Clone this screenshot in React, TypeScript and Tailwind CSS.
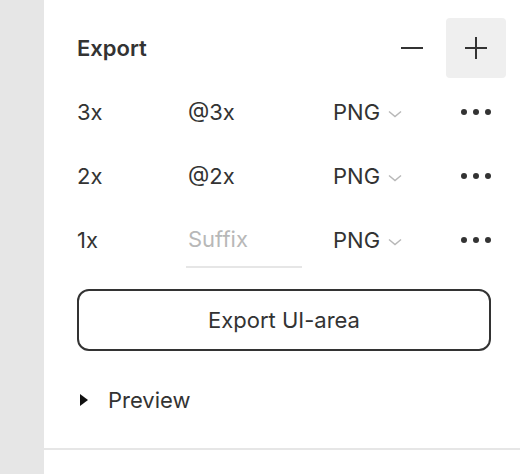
import React from 'react';

type ExportRow = { scale: string; suffix: string };

const rows: ExportRow[] = [
  { scale: '3x', suffix: '@3x' },
  { scale: '2x', suffix: '@2x' },
  { scale: '1x', suffix: '' },
];

const Chevron = () => (
  <svg width="14" height="8" viewBox="0 0 14 8" fill="none" className="ml-[8px] mt-[3px]">
    <path d="M1 1.5L7 6.5L13 1.5" stroke="#b8b8b8" strokeWidth="1.5" />
  </svg>
);

const Dots = () => (
  <div className="flex items-center gap-[6px]">
    <span className="block h-[6px] w-[6px] rounded-full bg-[#333]" />
    <span className="block h-[6px] w-[6px] rounded-full bg-[#333]" />
    <span className="block h-[6px] w-[6px] rounded-full bg-[#333]" />
  </div>
);

const App: React.FC = () => {
  return (
    <div
      className="flex h-[474px] w-[520px] overflow-hidden bg-white text-[#333]"
      style={{ fontFamily: 'Inter, "Noto Sans", sans-serif' }}
    >
      <div className="w-[44px] shrink-0 bg-[#e6e6e6]" />
      <div className="flex-1">
        <div className="border-b-2 border-[#e6e6e6] pb-[24px] pl-[33px] pr-[29px] pt-[18px]">
          {/* header */}
          <div className="mb-[2px] flex h-[60px] items-center">
            <span className="text-[22px] font-semibold">Export</span>
            <div className="-mr-[15px] ml-auto flex items-center gap-[4px]">
              <button className="flex h-[60px] w-[60px] items-center justify-center rounded-[4px]">
                <span className="block h-[2px] w-[22px] bg-[#333]" />
              </button>
              <button className="flex h-[60px] w-[60px] items-center justify-center rounded-[4px] bg-[#efefef]">
                <svg width="24" height="24" viewBox="0 0 24 24">
                  <path d="M12 1V23M1 12H23" stroke="#333" strokeWidth="2" />
                </svg>
              </button>
            </div>
          </div>

          {/* rows */}
          {rows.map((r) => (
            <div key={r.scale} className="flex h-[64px] items-center text-[22px]">
              <span className="w-[109px] shrink-0">{r.scale}</span>
              <div
                className={`flex h-[56px] w-[116px] shrink-0 items-center px-[2px] ${
                  r.suffix ? '' : 'border-b-2 border-[#e6e6e6]'
                }`}
              >
                {r.suffix ? (
                  <span>{r.suffix}</span>
                ) : (
                  <span className="text-[#b8b8b8]">Suffix</span>
                )}
              </div>
              <div className="ml-[31px] flex items-center">
                <span>PNG</span>
                <Chevron />
              </div>
              <div className="ml-auto">
                <Dots />
              </div>
            </div>
          ))}

          {/* export button */}
          <button className="mt-[17px] flex h-[62px] w-full items-center justify-center rounded-[12px] border-2 border-[#333] text-[22px]">
            Export UI-area
          </button>

          {/* preview */}
          <div className="mt-[25px] flex h-[48px] items-center text-[22px]">
            <svg width="8" height="12" viewBox="0 0 8 12" className="ml-[3px]">
              <path d="M0 0L8 6L0 12Z" fill="#111" />
            </svg>
            <span className="ml-[20px]">Preview</span>
          </div>
        </div>
      </div>
    </div>
  );
};

export default App;
